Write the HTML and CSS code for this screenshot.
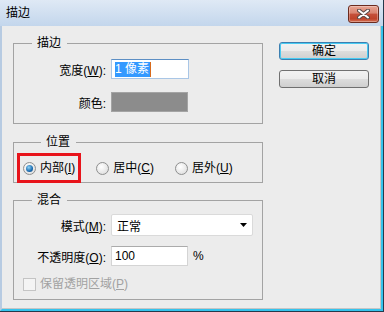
FILE: index.html
```html
<!DOCTYPE html>
<html lang="zh-CN">
<head>
    <meta charset="UTF-8">
    <title>描边</title>
    <link rel="stylesheet" href="styles.css">
</head>
<body>
    <div class="window">
        <div class="titlebar">
            <span class="title">描边</span>
            <span class="close">
                <svg width="13" height="10" viewBox="0 0 13 10">
                    <path d="M2 1.5 L11 8.5 M11 1.5 L2 8.5" stroke="#5a4a48" stroke-width="4" stroke-linecap="round"/>
                    <path d="M2 1.5 L11 8.5 M11 1.5 L2 8.5" stroke="#fff" stroke-width="2" stroke-linecap="round"/>
                </svg>
            </span>
        </div>

        <div class="client">
            <!-- Left column: group boxes -->
            <div class="groups">
                <fieldset class="group group-stroke">
                    <legend>描边</legend>
                    <div class="form-grid">
                        <label>宽度(<u>W</u>):</label>
                        <div class="field field-width"><span class="sel">1 像素</span><span class="caret"></span></div>
                        <label>颜色:</label>
                        <div class="swatch"></div>
                    </div>
                </fieldset>

                <fieldset class="group group-position">
                    <legend>位置</legend>
                    <div class="radios">
                        <label class="option marked"><span class="radio checked"></span><span>内部(<u>I</u>)</span></label>
                        <label class="option"><span class="radio"></span><span>居中(<u>C</u>)</span></label>
                        <label class="option"><span class="radio"></span><span>居外(<u>U</u>)</span></label>
                    </div>
                </fieldset>

                <fieldset class="group group-blend">
                    <legend>混合</legend>
                    <div class="form-grid blend-grid">
                        <label>模式(<u>M</u>):</label>
                        <div class="select">
                            <span>正常</span>
                            <svg width="7" height="4" viewBox="0 0 7 4"><path d="M0 0 H7 L3.5 4 Z" fill="#000"/></svg>
                        </div>
                        <label>不透明度(<u>O</u>):</label>
                        <div class="opacity-row">
                            <div class="field field-opacity">100</div>
                            <span>%</span>
                        </div>
                        <label class="option disabled check-row"><span class="checkbox"></span><span>保留透明区域(<u>P</u>)</span></label>
                    </div>
                </fieldset>
            </div>

            <!-- Right column: buttons -->
            <div class="buttons">
                <button class="btn btn-default">确定</button>
                <button class="btn">取消</button>
            </div>
        </div>
    </div>
</body>
</html>
```

FILE: styles.css
```css
body {
    margin: 0;
    font-family: "Liberation Sans", "Noto Sans CJK SC", sans-serif;
    font-size: 12px;
    color: #000;
}

.window {
    width: 384px;
    height: 312px;
    box-sizing: border-box;
    display: flex;
    flex-direction: column;
    border-right: 1px solid #26394b;
    border-bottom: 1px solid #26394b;
}

.titlebar {
    height: 26px;
    flex: none;
    display: flex;
    justify-content: space-between;
    align-items: flex-start;
    padding: 0 4px 0 6px;
    background: linear-gradient(#dfe9f5, #c3d6ec);
}

.title {
    line-height: 26px;
}

.close {
    margin-top: 5px;
    width: 31px;
    height: 18px;
    box-sizing: border-box;
    display: flex;
    align-items: center;
    justify-content: center;
    border: 1px solid #6b2b1f;
    border-radius: 3px;
    background: linear-gradient(#e8a594 0%, #d9836f 45%, #c5503a 50%, #bf4329 80%, #d57256 100%);
    box-shadow: inset 0 0 0 1px rgba(255, 255, 255, 0.3);
}

.client {
    flex: 1;
    display: flex;
    align-items: flex-start;
    padding: 9px 0 0 11px;
    background: #ececec;
    border-left: 2px solid #b7cbe2;
    border-right: 2px solid #35c3ec;
    border-bottom: 2px solid #35c3ec;
    box-shadow: inset -1px -1px 0 #c6c6c6;
}

.groups {
    width: 250px;
    display: flex;
    flex-direction: column;
}

.group {
    margin: 0;
    min-width: 0;
    border: 1px solid #a3a3a3;
}

.group legend {
    margin-left: 18px;
    padding: 0 6px 0 5px;
    height: 17px;
    line-height: 17px;
}

.group-stroke {
    padding: 7px 0 11px 0;
}

.group-position {
    margin-top: 10px;
    padding: 8px 0 5px 9px;
}

.group-blend {
    margin-top: 9px;
    padding: 5px 0 6px 0;
}

.form-grid {
    display: grid;
    grid-template-columns: 92px 1fr;
    column-gap: 5px;
    row-gap: 13px;
    align-items: center;
}

.form-grid > label {
    text-align: right;
}

.blend-grid {
    row-gap: 10px;
}

.field {
    height: 20px;
    box-sizing: border-box;
    display: flex;
    align-items: center;
    padding-left: 3px;
    background: #fff;
    border: 1px solid #d4d4d4;
    border-top-color: #ababab;
}

.field-width {
    width: 78px;
    border: 1px solid #a9c6e6;
    border-top-color: #5d8fc4;
}

.sel {
    background: #3399ff;
    color: #fff;
    line-height: 15px;
    padding-right: 1px;
}

.caret {
    width: 1px;
    height: 15px;
    background: #d86a1c;
}

.swatch {
    width: 77px;
    height: 20px;
    box-sizing: border-box;
    background: #8c8c8c;
    border: 1px solid #a4a4a4;
}

.radios {
    display: flex;
    gap: 21px;
}

.option {
    display: flex;
    align-items: center;
    gap: 4px;
    height: 18px;
    line-height: 18px;
}

.marked {
    outline: 3px solid #e8141b;
    outline-offset: 3px;
}

.radio {
    width: 13px;
    height: 13px;
    box-sizing: border-box;
    border-radius: 50%;
    border: 1px solid #8e8f8f;
    background: radial-gradient(circle at 40% 35%, #ffffff, #d8d8d8);
    display: flex;
    align-items: center;
    justify-content: center;
}

.radio.checked::after {
    content: "";
    width: 7px;
    height: 7px;
    border-radius: 50%;
    background: radial-gradient(circle at 40% 35%, #8fd3f6, #1a6bb0 60%, #0c3f78);
}

.select {
    width: 142px;
    height: 22px;
    box-sizing: border-box;
    display: flex;
    align-items: center;
    justify-content: space-between;
    padding: 0 5px 0 5px;
    background: #fff;
    border: 1px solid #dadada;
    border-radius: 2px;
}

.opacity-row {
    display: flex;
    align-items: center;
    gap: 5px;
}

.field-opacity {
    width: 77px;
}

.check-row {
    grid-column: 1 / -1;
    padding-left: 9px;
    margin-top: -1px;
}

.checkbox {
    width: 13px;
    height: 13px;
    box-sizing: border-box;
    border: 1px solid #c4c4c4;
    background: #f4f4f4;
}

.disabled {
    color: #a2a2a2;
}

.buttons {
    margin: 7px 0 0 16px;
    display: flex;
    flex-direction: column;
    gap: 10px;
}

.btn {
    width: 90px;
    height: 18px;
    padding: 0;
    font: inherit;
    line-height: 16px;
    color: #000;
    border: 1px solid #707070;
    border-radius: 3px;
    background: linear-gradient(#f2f2f2 0%, #ebebeb 50%, #dddddd 51%, #cfcfcf 100%);
}

.btn-default {
    border-color: #3c7fb1;
    box-shadow: inset 0 0 0 1px #48cbf2;
}
```
